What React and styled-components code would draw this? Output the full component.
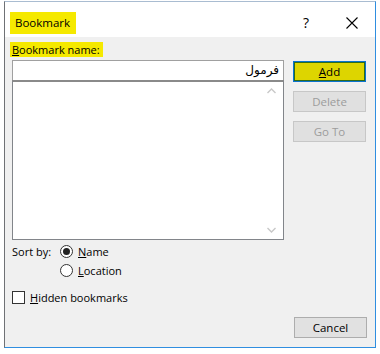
import styled, { createGlobalStyle } from 'styled-components';

const Global = createGlobalStyle`
  html, body {
    margin: 0;
    padding: 0;
    background: #ffffff;
  }
  body {
    font-family: "Segoe UI", "Open Sans", "DejaVu Sans", sans-serif;
    font-size: 11px;
    color: #000;
  }
`;

export default function App() {
  return (
    <>
      <Global />
      <Window>
        <TitleBar>
          <Title>Bookmark</Title>
          <Caption>
            <Help>?</Help>
            <Close>
              <svg width="12" height="12" viewBox="0 0 12 12">
                <path d="M0.5 0.5 L11.5 11.5 M11.5 0.5 L0.5 11.5" stroke="#000" strokeWidth="1.1" fill="none" />
              </svg>
            </Close>
          </Caption>
        </TitleBar>
        <Body>
          <Main>
            <Left>
              <Label><u>B</u>ookmark name:</Label>
              <NameInput dir="rtl">فرمول</NameInput>
              <List>
                <ScrollArrow $pos="top">
                  <svg width="9" height="6" viewBox="0 0 9 6">
                    <path d="M0.5 5 L4.5 1 L8.5 5" stroke="#c8c8c8" strokeWidth="1.4" fill="none" />
                  </svg>
                </ScrollArrow>
                <ScrollArrow $pos="bottom">
                  <svg width="9" height="6" viewBox="0 0 9 6">
                    <path d="M0.5 1 L4.5 5 L8.5 1" stroke="#c8c8c8" strokeWidth="1.4" fill="none" />
                  </svg>
                </ScrollArrow>
              </List>
            </Left>
            <Right>
              <Button $primary><u>A</u>dd</Button>
              <Button disabled>Delete</Button>
              <Button disabled>Go To</Button>
            </Right>
          </Main>
          <SortRow>
            <SortLabel>Sort by:</SortLabel>
            <Radios>
              <Option>
                <Radio $checked />
                <span><u>N</u>ame</span>
              </Option>
              <Option>
                <Radio />
                <span><u>L</u>ocation</span>
              </Option>
            </Radios>
          </SortRow>
          <Option $check>
            <Check />
            <span><u>H</u>idden bookmarks</span>
          </Option>
          <Footer>
            <Button>Cancel</Button>
          </Footer>
        </Body>
      </Window>
    </>
  );
}

const Window = styled.div`
  margin: 1px 0 0 4px;
  width: 372px;
  height: 347px;
  box-sizing: border-box;
  border-top: 1px solid #a9bcd1;
  border-left: 1px solid #6f7175;
  border-right: 1px solid #2f8ee0;
  border-bottom: 1px solid #2f8ee0;
  display: flex;
  flex-direction: column;
  background: #f0f0f0;
`;

const TitleBar = styled.div`
  height: 35px;
  flex: none;
  background: #ffffff;
  display: flex;
  align-items: center;
  justify-content: space-between;
  padding: 0 0 0 5px;
`;

const Title = styled.div`
  background: #f5e900;
  height: 22px;
  box-sizing: border-box;
  padding: 0 6px 0 5px;
  display: flex;
  align-items: center;
  font-size: 11.5px;
  margin-top: 6px;
`;

const Caption = styled.div`
  display: flex;
  align-items: center;
  margin-top: 6px;
`;

const Help = styled.span`
  font-size: 14px;
  width: 46px;
  text-align: center;
`;

const Close = styled.span`
  width: 46px;
  display: flex;
  justify-content: center;
`;

const Body = styled.div`
  flex: 1;
  display: flex;
  flex-direction: column;
  padding: 5px 8px 9px 7px;
`;

const Main = styled.div`
  display: flex;
  gap: 9px;
`;

const Left = styled.div`
  width: 272px;
  display: flex;
  flex-direction: column;
`;

const Label = styled.div`
  align-self: flex-start;
  background: #f5e900;
  height: 15px;
  line-height: 15px;
  padding: 0 3px 0 2px;
  margin-left: -2px;
  margin-bottom: 3px;
`;

const NameInput = styled.div`
  height: 20px;
  box-sizing: border-box;
  background: #fff;
  border: 1px solid #a0a0a0;
  border-bottom: none;
  padding: 0 4px;
  line-height: 18px;
  font-family: "DejaVu Sans", sans-serif;
  font-size: 12px;
`;

const List = styled.div`
  position: relative;
  height: 160px;
  box-sizing: border-box;
  background: #fff;
  border: 1px solid #82858a;
  border-top: 2px solid #8a8a8a;
`;

const ScrollArrow = styled.div`
  position: absolute;
  right: 7px;
  ${(p) => (p.$pos === 'top' ? 'top: 6px;' : 'bottom: 6px;')}
  line-height: 0;
`;

const Right = styled.div`
  margin-top: 19px;
  display: flex;
  flex-direction: column;
  gap: 9px;
`;

const Button = styled.button`
  width: 73px;
  height: 21px;
  box-sizing: border-box;
  font-family: inherit;
  font-size: 11.5px;
  padding: 0;
  background: ${(p) => (p.$primary ? '#ddd500' : '#e1e1e1')};
  border: 1px solid ${(p) => (p.$primary ? '#0a73d0' : '#adadad')};
  box-shadow: ${(p) => (p.$primary ? 'inset 0 0 0 1px #2f6a1a' : 'none')};
  color: #000;

  &:disabled {
    background: #e0e0e0;
    border-color: #c7c7c7;
    color: #9c9c9c;
  }
`;

const SortRow = styled.div`
  display: flex;
  margin-top: 2px;
`;

const SortLabel = styled.div`
  width: 48px;
  height: 19px;
  line-height: 19px;
`;

const Radios = styled.div`
  display: flex;
  flex-direction: column;
`;

const Option = styled.div`
  display: flex;
  align-items: center;
  gap: 5px;
  height: 19px;
  margin-top: ${(p) => (p.$check ? '8px' : '0')};
`;

const Radio = styled.span`
  width: 11px;
  height: 11px;
  border: 1px solid #333;
  border-radius: 50%;
  background: #fff;
  display: grid;
  place-items: center;

  &::after {
    content: '';
    width: 7px;
    height: 7px;
    border-radius: 50%;
    background: ${(p) => (p.$checked ? '#222' : 'transparent')};
  }
`;

const Check = styled.span`
  width: 11px;
  height: 11px;
  border: 1px solid #333;
  background: #fff;
`;

const Footer = styled.div`
  margin-top: auto;
  display: flex;
  justify-content: flex-end;
`;
